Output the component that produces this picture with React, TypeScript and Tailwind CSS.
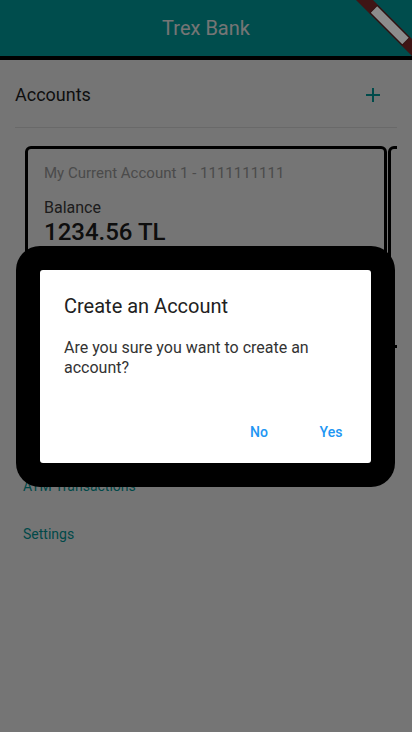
import React from "react";

const cards = [
  { name: "My Current Account 1 - 1111111111", balance: "1234.56 TL" },
  { name: "", balance: "" },
];

function DebugBanner() {
  return (
    <svg className="absolute right-0 top-0 z-20" width="56" height="56" viewBox="0 0 56 56">
      <line x1="0" y1="-8.5" x2="64" y2="55.5" stroke="#3f1515" strokeWidth="12" />
      <line x1="17.5" y1="9" x2="50" y2="41.5" stroke="#2a1010" strokeWidth="11" />
      <line x1="18" y1="9.5" x2="49.5" y2="41" stroke="#8c8c8c" strokeWidth="9" />
    </svg>
  );
}

function AccountCard({ name, balance }: { name: string; balance: string }) {
  return (
    <div className="h-[202px] w-[362px] shrink-0 rounded-[6px] border-[3px] border-black px-4 pt-[14px]">
      {name && (
        <>
          <p className="text-[15px] leading-5 text-[#a3a3a3]">{name}</p>
          <p className="mt-[15px] text-[16px] leading-5 text-[#404040]">Balance</p>
          <p className="text-[24px] font-medium leading-7 text-[#202020]">{balance}</p>
        </>
      )}
    </div>
  );
}

export default function App() {
  return (
    <div className="relative h-[732px] w-[412px] overflow-hidden bg-white font-['Roboto',sans-serif]">
      <header className="flex h-[60px] items-center justify-center border-b-4 border-black bg-[#00a8a8] pb-[1px]">
        <h1 className="text-[20px] leading-6 text-white">Trex Bank</h1>
      </header>

      <div className="mx-[15px] flex h-[68px] items-center justify-between border-b border-[#e4e4e4] pt-[2px]">
        <span className="text-[18px] text-[#1f1f1f]">Accounts</span>
        <svg className="mr-[16px]" width="16" height="16" viewBox="0 0 16 16">
          <path d="M8 1v14M1 8h14" stroke="#00a3a3" strokeWidth="2" />
        </svg>
      </div>

      <div className="mx-[15px] mt-[18px] flex gap-[1px] overflow-hidden pl-[10px]">
        {cards.map((c, i) => (
          <AccountCard key={i} name={c.name} balance={c.balance} />
        ))}
      </div>

      <nav className="mt-[82px] flex flex-col gap-[32px] px-[23px] text-[14px] leading-4 text-[#00a0a0]">
        <a>Transfers</a>
        <a>ATM Transactions</a>
        <a>Settings</a>
      </nav>

      <div className="absolute inset-0 z-10 flex items-center justify-center bg-black/[0.54]">
        <div className="ml-[-1px] rounded-[24px] bg-black p-6">
          <div className="w-[331px] rounded-[3px] bg-white">
            <h2 className="px-6 pt-6 text-[20px] leading-6 text-[#212121]">Create an Account</h2>
            <p className="px-6 pb-6 pt-5 text-[16px] leading-5 text-[#333333]">
              Are you sure you want to create an account?
            </p>
            <div className="flex justify-end gap-2 px-2 pb-[12px] pt-[13px]">
              <button className="h-9 w-16 text-[14px] font-medium text-[#2196f3]">No</button>
              <button className="h-9 w-16 text-[14px] font-medium text-[#2196f3]">Yes</button>
            </div>
          </div>
        </div>
      </div>

      <DebugBanner />
    </div>
  );
}
